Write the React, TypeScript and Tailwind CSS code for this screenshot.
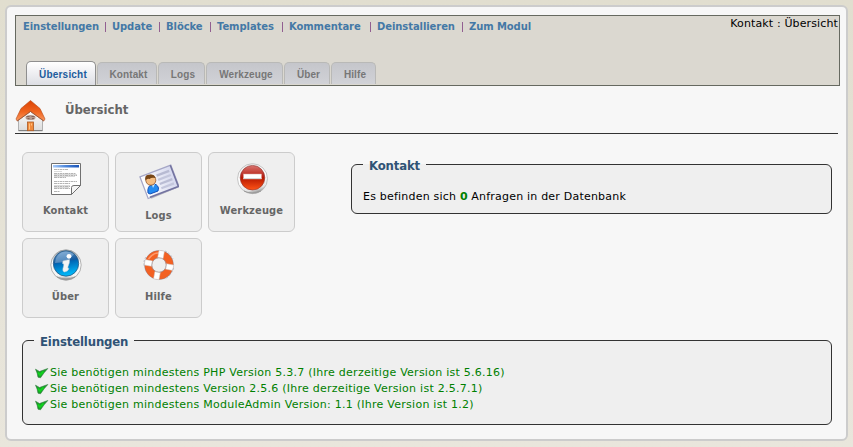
import type { ReactNode } from "react";

const links = [
  { label: "Einstellungen", width: "w-[89px]" },
  { label: "Update", width: "w-[54px]" },
  { label: "Blöcke", width: "w-[51px]" },
  { label: "Templates", width: "w-[72px]" },
  { label: "Kommentare", width: "w-[88px]" },
  { label: "Deinstallieren", width: "w-[92px]" },
  { label: "Zum Modul", width: "w-[70px]" },
];

const tabs = [
  { label: "Kontakt", width: "w-[60px]" },
  { label: "Logs", width: "w-[47px]" },
  { label: "Werkzeuge", width: "w-[77px]" },
  { label: "Über", width: "w-[46px]" },
  { label: "Hilfe", width: "w-[45px]" },
];

const checks = [
  "Sie benötigen mindestens PHP Version 5.3.7 (Ihre derzeitige Version ist 5.6.16)",
  "Sie benötigen mindestens Version 2.5.6 (Ihre derzeitige Version ist 2.5.7.1)",
  "Sie benötigen mindestens ModuleAdmin Version: 1.1 (Ihre Version ist 1.2)",
];

function House() {
  return (
    <svg width="32" height="32" viewBox="0 0 32 32" className="block">
      <defs>
        <linearGradient id="roof" x1="0" y1="0" x2="0" y2="1">
          <stop offset="0" stopColor="#dc4304" />
          <stop offset=".55" stopColor="#f0641f" />
          <stop offset="1" stopColor="#fa9a62" />
        </linearGradient>
        <linearGradient id="wall" x1="0" y1="0" x2="0" y2="1">
          <stop offset="0" stopColor="#fff" />
          <stop offset="1" stopColor="#dcdcdc" />
        </linearGradient>
      </defs>
      <path d="M3.500 18 L15.500 9 L27.500 18 V30.500 H3.500Z" fill="url(#wall)" stroke="#b0b0b0" />
      <path d="M3.500 30.700H27.500" stroke="#777" />
      <path d="M15.500 .5 L6 8.500 L1 19 L2.200 21 L15.500 11.500 L28.800 21 L30 19 L25 8.500Z" fill="url(#roof)" stroke="#b14a18" strokeWidth=".6" />
      <path d="M2.200 21 L15.500 11.500 L28.800 21" fill="none" stroke="#96553a" strokeWidth=".8" />
      <ellipse cx="15.500" cy="17.500" rx="5" ry="2.600" fill="#b59a90" />
      <path d="M11.500 16.500h3M12.500 18.500h2M16.500 16.500h3M17 18.500h2" stroke="#76594f" strokeWidth=".8" />
      <rect x="12.500" y="22" width="6" height="8.700" fill="#f18b3d" stroke="#aa5a24" strokeWidth=".8" />
      <path d="M14.500 23.500v6M16.500 23.500v2" stroke="#ffc17f" />
    </svg>
  );
}

function DocumentIcon() {
  return (
    <svg width="32" height="32" viewBox="0 0 32 32" className="block">
      <defs>
        <linearGradient id="docbar">
          <stop offset="0" stopColor="#a9ccfa" />
          <stop offset=".5" stopColor="#4c86db" />
          <stop offset="1" stopColor="#1b54b8" />
        </linearGradient>
      </defs>
      <path d="M1.500 .5H30.500V22.500L21.500 31.500H1.500Z" fill="#fff" stroke="#707070" />
      <rect x="3" y="2" width="26" height="2.500" fill="url(#docbar)" />
      <path d="M4 6.500H18M4 10.500H26M4 12.500H27M4 14.500H16M4 18.500H27M4 20.500H20M4 23.500H20M4 25.500H20M4 28.500H10" stroke="#b4b4b4" strokeDasharray="3 .5 1.500 .5" />
      <path d="M4 8.500H12M4 11.500H27M4 13.500H25M4 24.500H19M4 22.500H20" stroke="#dadada" />
      <path d="M30.500 22.500L21.500 31.500V24.500Q21.500 22.500 24 22.500Z" fill="#f6f6f6" stroke="#707070" />
    </svg>
  );
}

function CardIcon() {
  return (
    <svg width="40" height="38" viewBox="0 0 40 38" className="block">
      <defs>
        <linearGradient id="cardfill">
          <stop offset="0" stopColor="#fff" />
          <stop offset="1" stopColor="#d5d8ee" />
        </linearGradient>
      </defs>
      <path d="M12 35L38 24" stroke="#bbb" strokeWidth="1.500" />
      <g transform="rotate(-21 20 19)">
        <rect x="4" y="7.500" width="33" height="23" fill="url(#cardfill)" stroke="#a5a6c6" strokeWidth="1.300" />
        <path d="M36.500 7.500V30H6" fill="none" stroke="#73739f" strokeWidth="1.500" />
        <rect x="20" y="11" width="13.500" height="2.500" fill="#b7bad2" />
        <rect x="20" y="15.500" width="13.500" height="2.300" fill="#c3c6dc" />
        <rect x="20" y="20" width="13.500" height="2.300" fill="#babdd4" />
        <rect x="20" y="24.500" width="13.500" height="2.300" fill="#c3c6dc" />
      </g>
      <path d="M9 30 Q8 23 13 21.500 Q18 20 19.500 25 L19 28 L11 31Z" fill="#248bf0" stroke="#1250ba" />
      <path d="M13 22l1 3 2-4" fill="#c9eaff" />
      <circle cx="11.800" cy="17.200" r="5" fill="#f5bd82" stroke="#94582b" strokeWidth=".8" />
      <path d="M6.500 17.500Q5 12.500 9.500 11.800Q15 10.500 16.700 15Q12.500 14 10.500 16Q8 15 6.500 17.500Z" fill="#774617" />
    </svg>
  );
}

function StopIcon() {
  return (
    <svg width="32" height="32" viewBox="0 0 32 32" className="block">
      <defs>
        <linearGradient id="chrome" x1=".3" y1="0" x2=".6" y2="1">
          <stop offset="0" stopColor="#efefef" />
          <stop offset=".5" stopColor="#fff" />
          <stop offset=".85" stopColor="#e2e2e2" />
          <stop offset="1" stopColor="#858585" />
        </linearGradient>
        <linearGradient id="red" x1="0" y1="0" x2="0" y2="1">
          <stop offset="0" stopColor="#d97570" />
          <stop offset=".46" stopColor="#b71f13" />
          <stop offset=".5" stopColor="#b61800" />
          <stop offset="1" stopColor="#ff5417" />
        </linearGradient>
      </defs>
      <circle cx="16.500" cy="15.700" r="15" fill="url(#chrome)" stroke="#b8b8b8" strokeWidth=".8" />
      <path d="M8 28Q16 32 25 28" fill="none" stroke="#9a9a9a" />
      <circle cx="16.500" cy="14.700" r="12.300" fill="url(#red)" stroke="#8d3833" strokeWidth=".6" />
      <rect x="7.500" y="11" width="18" height="5" fill="#fff" stroke="#dba39b" strokeWidth=".5" />
      <path d="M7.500 15.500h18" stroke="#d5d5d5" />
    </svg>
  );
}

function InfoIcon() {
  return (
    <svg width="32" height="32" viewBox="0 0 32 32" className="block">
      <defs>
        <linearGradient id="steel" x1="0" y1="0" x2="0" y2="1">
          <stop offset="0" stopColor="#8c98a3" />
          <stop offset=".4" stopColor="#fff" />
          <stop offset=".86" stopColor="#f3f3f3" />
          <stop offset="1" stopColor="#808080" />
        </linearGradient>
        <linearGradient id="blue" x1="0" y1="0" x2=".2" y2="1">
          <stop offset="0" stopColor="#6999c8" />
          <stop offset=".48" stopColor="#155b9f" />
          <stop offset=".52" stopColor="#0066b5" />
          <stop offset="1" stopColor="#00b5f6" />
        </linearGradient>
      </defs>
      <circle cx="16" cy="16" r="15.200" fill="url(#steel)" stroke="#a0a0a0" strokeWidth=".8" />
      <circle cx="16" cy="14.500" r="12.700" fill="url(#blue)" stroke="#295b83" strokeWidth=".8" />
      <path d="M5 14Q6 4 15 2.500Q20 2 24 5Q18 14 5 14Z" fill="#d8edff" opacity=".32" />
      <circle cx="19" cy="7.300" r="2.400" fill="#fff" />
      <path d="M13 12L19.500 10.500Q20 13 18 17.500Q17.300 20 19 19.500Q18 22.500 14.500 23Q11.800 22.500 13.500 17.500Q14.500 14.500 12.500 14.500Z" fill="#f4f4f4" stroke="#c4d1d7" strokeWidth=".5" />
      <path d="M7 28Q16 32 25 28" fill="none" stroke="#999" />
    </svg>
  );
}

function LifeRing() {
  return (
    <svg width="32" height="32" viewBox="0 0 32 32" className="block">
      <circle cx="16" cy="16" r="14.500" fill="none" stroke="#b5b4bf" strokeWidth="1" />
      <circle cx="16" cy="16" r="10.700" fill="none" stroke="#c56a4c" strokeWidth="7.400" />
      <circle cx="16" cy="16" r="10.700" fill="none" stroke="#f36123" strokeWidth="6.600" />
      <path d="M5.500 10Q11 2 19 4.500" fill="none" stroke="#ff9869" strokeWidth="1.500" />
      <g transform="rotate(11 16 16)" stroke="#d1cfcc" strokeWidth=".5">
        <path d="M13.300 1.500H18.700V9H13.300ZM13.300 23H18.700V30.500H13.300ZM1.500 13.300H9V18.700H1.500ZM23 13.300H30.500V18.700H23Z" fill="#fff" />
      </g>
      <circle cx="16" cy="16" r="7.300" fill="none" stroke="#9a959d" strokeWidth=".6" />
      <path d="M3 8Q.5 11 1 17M22 2Q28 5 30 10M30.500 19Q28 27 22 30" fill="none" stroke="#babac3" strokeDasharray="2 1.500" />
    </svg>
  );
}

function Check() {
  return (
    <svg width="14" height="12" viewBox="0 0 14 12" className="-ml-px mr-px block">
      <path d="M.5 2.200L4.500 4.500L12.800 1.500Q9 5.500 5.500 10.800L3 10.200Q2.500 6 .5 2.200Z" fill="#18a028" stroke="#2d7a3a" strokeWidth=".6" />
      <path d="M3 5.500L5 8L8.500 4.500" fill="none" stroke="#0fd51c" strokeWidth="1.800" />
    </svg>
  );
}

function Tile({ label, icon, gap = "h-[52px]" }: { label: string; icon: ReactNode; gap?: string }) {
  return (
    <a className="flex h-20 w-[87px] flex-col items-center rounded-[6px] border border-[#ccc] bg-[#efefef]">
      <span className={`flex flex-none items-start pt-2.5 ${gap}`}>{icon}</span>
      <span className="font-['DejaVu_Sans_Condensed','DejaVu_Sans',sans-serif] text-[11px] leading-3 font-bold tracking-[0.15px] text-[#666]">{label}</span>
    </a>
  );
}

function Panel({ title, className, children }: { title: string; className: string; children: ReactNode }) {
  return (
    <fieldset className={`rounded-[6px] border border-[#333] bg-[#efefef] pl-[11px] ${className}`}>
      <legend className="h-[21px] px-1.5 pt-[2px] font-['DejaVu_Sans_Condensed','DejaVu_Sans',sans-serif] text-[13px] leading-[19px] font-bold tracking-[-0.14px] text-[#2f5376]">{title}</legend>
      {children}
    </fieldset>
  );
}

export default function App() {
  return (
    <div className="h-[447px] w-[853px] overflow-hidden bg-linear-to-b from-[#e1decf] to-[#e9e6dc] px-[5px] pt-[5px] font-['DejaVu_Sans',sans-serif] text-[11px] text-black">
      <main className="h-[436px] rounded-[6px] border-2 border-[#ccc] bg-[#f7f7f7] px-2 pt-2">
        <header className="flex h-[71px] w-[825px] flex-col justify-between border border-[#666960] bg-[#dbd8d0]">
          <div className="flex justify-between">
            <nav className="flex pt-[5px] pl-[7px] text-[10px] leading-3 font-bold tracking-[-0.08px] whitespace-nowrap text-[#4478a6]">
              {links.map((l, i) => (
                <span key={l.label} className={`flex justify-between pr-[4px] ${l.width}`}>
                  <a>{l.label}</a>
                  {i < links.length - 1 && <i className="mt-px mr-[2px] h-[10px] w-px bg-[#925f91]" />}
                </span>
              ))}
            </nav>
            <span className="pt-px pr-px leading-[14px] tracking-[0.13px]">Kontakt : Übersicht</span>
          </div>
          <nav className="flex h-6 items-end gap-px pl-[10px] font-['Liberation_Sans',Arial,sans-serif] text-[10px] font-bold text-[#777]">
            <a className="flex h-6 w-[70px] items-center justify-center rounded-t-[5px] border border-b-0 border-[#8f8f8f] bg-linear-to-b from-white to-[#dddee4] pt-[2px] pl-1 tracking-[0.2px] text-[#205c9d]">Übersicht</a>
            {tabs.map((t) => (
              <a key={t.label} className={`mb-px flex h-[22px] items-center justify-center rounded-t-[5px] border border-b-0 border-[#b9b9b7] bg-linear-to-b from-[#c5c6cb] to-[#d1d2d7] pt-[2px] pl-[3px] tracking-[0.1px] ${t.width}`}>{t.label}</a>
            ))}
          </nav>
        </header>

        <div className="flex h-12 w-[823px] border-b border-[#333]">
          <div className="mt-[14px]"><House /></div>
          <h1 className="mt-4 ml-[18px] font-['DejaVu_Sans_Condensed','DejaVu_Sans',sans-serif] text-[13px] leading-4 font-bold text-[#666]">Übersicht</h1>
        </div>

        <div className="flex pt-[18px] pl-[7px]">
          <div className="grid h-[166px] w-[273px] grid-cols-3 gap-1.5">
            <Tile label="Kontakt" icon={<DocumentIcon />} />
            <Tile label="Logs" icon={<CardIcon />} gap="h-[57px]" />
            <Tile label="Werkzeuge" icon={<StopIcon />} />
            <Tile label="Über" icon={<InfoIcon />} />
            <Tile label="Hilfe" icon={<LifeRing />} />
          </div>
          <Panel title="Kontakt" className="mt-[2px] ml-[56px] h-[60px] w-[481px]">
            <p className="mt-[15px] leading-[14px] tracking-[0.21px] whitespace-nowrap">Es befinden sich <b className="tracking-normal text-[#008000]">0</b> Anfragen in der Datenbank</p>
          </Panel>
        </div>

        <Panel title="Einstellungen" className="mt-3 ml-[7px] h-[95px] w-[810px]">
          <ul className="mt-[14px] ml-[2px] text-[#008000]">
            {checks.map((c) => (
              <li key={c} className="flex h-4 items-center whitespace-nowrap"><Check /><span className="leading-4 tracking-[0.255px]">{c}</span></li>
            ))}
          </ul>
        </Panel>
      </main>
    </div>
  );
}
